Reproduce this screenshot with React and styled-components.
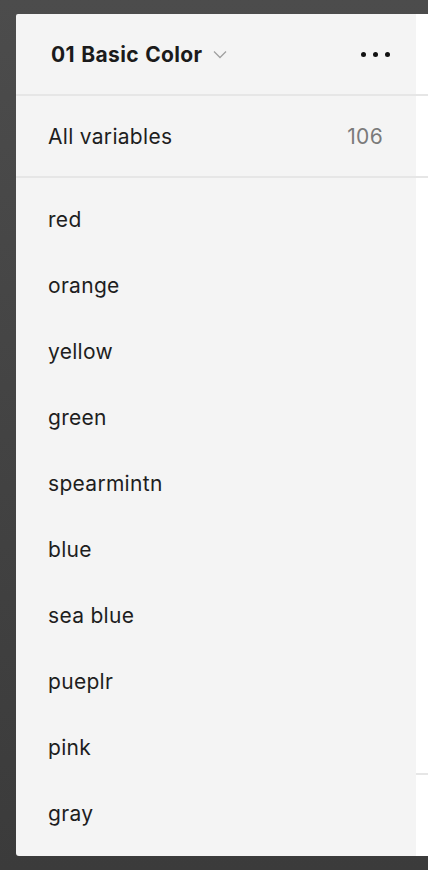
import React from 'react';
import styled, { createGlobalStyle } from 'styled-components';

const GlobalStyle = createGlobalStyle`
  html, body {
    margin: 0;
    padding: 0;
    height: 870px;
    overflow: hidden;
  }
  body {
    background: linear-gradient(180deg, #4c4c4c 0%, #434343 50%, #3b3b3b 100%);
    font-family: Inter, "Noto Sans", sans-serif;
  }
`;

const Screen = styled.div`
  display: flex;
  padding: 14px 0 0 16px;
  height: 842px;
`;

const Sidebar = styled.div`
  width: 400px;
  height: 842px;
  background: #f4f4f4;
  border-radius: 2px 0 0 3px;
  display: flex;
  flex-direction: column;
`;

const Header = styled.div`
  height: 80px;
  display: flex;
  align-items: center;
  justify-content: space-between;
  padding: 0 26px 0 35px;
  border-bottom: 2px solid #e6e6e6;
`;

const Title = styled.div`
  display: flex;
  align-items: center;
  gap: 10px;
  font-size: 21px;
  font-weight: 700;
  color: #1b1b1b;
  letter-spacing: 0.35px;
  word-spacing: 1px;
`;

const Dots = styled.div`
  display: flex;
  gap: 7px;
  span {
    width: 5px;
    height: 5px;
    border-radius: 50%;
    background: #111;
  }
`;

const AllRow = styled.div`
  height: 80px;
  display: flex;
  align-items: center;
  justify-content: space-between;
  padding: 0 33px 0 32px;
  border-bottom: 2px solid #e6e6e6;
  font-size: 21px;
  letter-spacing: 0.3px;
  color: #1e1e1e;
`;

const Count = styled.span`
  color: #7a7a7a;
`;

const List = styled.div`
  padding-top: 8px;
  display: flex;
  flex-direction: column;
`;

const Item = styled.div`
  height: 66px;
  display: flex;
  align-items: center;
  padding-left: 32px;
  font-size: 21px;
  letter-spacing: 0.3px;
  color: #1e1e1e;
`;

const Main = styled.div`
  flex: 1;
  height: 842px;
  background: #ffffff;
  display: flex;
  flex-direction: column;
`;

const Strip = styled.div`
  height: ${p => p.$h}px;
  flex-shrink: 0;
  border-bottom: 2px solid #e6e6e6;
`;

const names = ['red', 'orange', 'yellow', 'green', 'spearmintn', 'blue', 'sea blue', 'pueplr', 'pink', 'gray'];

export default function App() {
  return (
    <>
      <GlobalStyle />
      <Screen>
        <Sidebar>
          <Header>
            <Title>
              01 Basic Color
              <svg width="14" height="9" viewBox="0 0 14 9" fill="none">
                <path d="M1 1.5l6 6 6-6" stroke="#a0a0a0" strokeWidth="1.3" />
              </svg>
            </Title>
            <Dots><span /><span /><span /></Dots>
          </Header>
          <AllRow>
            All variables
            <Count>106</Count>
          </AllRow>
          <List>
            {names.map(n => <Item key={n}>{n}</Item>)}
          </List>
        </Sidebar>
        <Main>
          <Strip $h={80} />
          <Strip $h={80} />
          <Strip $h={595} />
        </Main>
      </Screen>
    </>
  );
}
